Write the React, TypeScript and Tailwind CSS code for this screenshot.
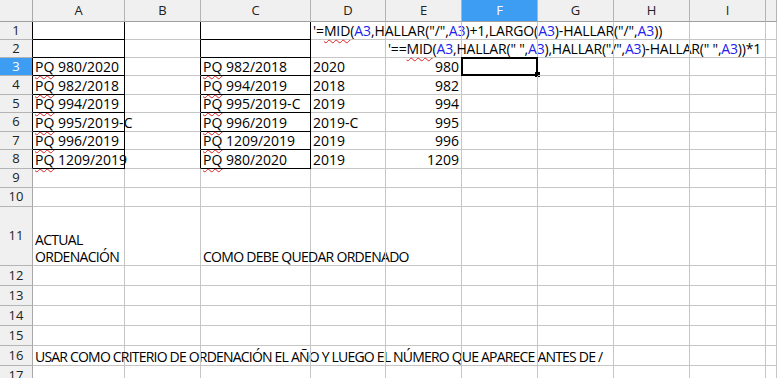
import React from "react";

const COLS = ["A", "B", "C", "D", "E", "F", "G", "H", "I", ""];
const COLW = [
  "w-[92px]",
  "w-[76px]",
  "w-[110px]",
  "w-[75px]",
  "w-[76px]",
  "w-[76px]",
  "w-[76px]",
  "w-[76px]",
  "w-[76px]",
  "flex-1",
];

const ROWH: Record<number, string> = {
  1: "h-[18px]",
  2: "h-[18px]",
  3: "h-[18px]",
  4: "h-[19px]",
  5: "h-[18px]",
  6: "h-[19px]",
  7: "h-[18px]",
  8: "h-[19px]",
  9: "h-[19px]",
  10: "h-[19px]",
  11: "h-[59px]",
  12: "h-[20px]",
  13: "h-[20px]",
  14: "h-[20px]",
  15: "h-[20px]",
  16: "h-[20px]",
  17: "h-[20px]",
};

const Ref = ({ children }: { children: React.ReactNode }) => (
  <span className="text-[#2222ee]">{children}</span>
);
const Sq = ({ children }: { children: React.ReactNode }) => (
  <span className="underline decoration-wavy decoration-[#e02020] decoration-1 underline-offset-[3px]">
    {children}
  </span>
);

const PQ = ({ t }: { t: string }) => (
  <span>
    <Sq>PQ</Sq> {t}
  </span>
);

const F1 = (
  <span className="tracking-[-0.1px]">
    '=<Sq>MID</Sq>(<Ref>A3</Ref>,HALLAR("/",<Ref>A3</Ref>)+1,LARGO(<Ref>A3</Ref>)-HALLAR("/",<Ref>A3</Ref>))
  </span>
);
const F2 = (
  <span className="tracking-[-0.2px]">
    '==<Sq>MID</Sq>(<Ref>A3</Ref>,HALLAR(" ",<Ref>A3</Ref>),HALLAR("/",<Ref>A3</Ref>)-HALLAR(" ",<Ref>A3</Ref>))*1
  </span>
);

type CellDef = { c: React.ReactNode; right?: boolean };

const data: Record<number, Record<number, CellDef>> = {
  1: { 3: { c: F1 } },
  2: { 4: { c: F2 } },
  3: { 0: { c: <PQ t="980/2020" /> }, 2: { c: <PQ t="982/2018" /> }, 3: { c: "2020" }, 4: { c: "980", right: true } },
  4: { 0: { c: <PQ t="982/2018" /> }, 2: { c: <PQ t="994/2019" /> }, 3: { c: "2018" }, 4: { c: "982", right: true } },
  5: { 0: { c: <PQ t="994/2019" /> }, 2: { c: <PQ t="995/2019-C" /> }, 3: { c: "2019" }, 4: { c: "994", right: true } },
  6: { 0: { c: <PQ t="995/2019-C" /> }, 2: { c: <PQ t="996/2019" /> }, 3: { c: "2019-C" }, 4: { c: "995", right: true } },
  7: { 0: { c: <PQ t="996/2019" /> }, 2: { c: <PQ t="1209/2019" /> }, 3: { c: "2019" }, 4: { c: "996", right: true } },
  8: { 0: { c: <PQ t="1209/2019" /> }, 2: { c: <PQ t="980/2020" /> }, 3: { c: "2019" }, 4: { c: "1209", right: true } },
  11: {
    0: {
      c: (
        <span className="whitespace-normal leading-[17px] block w-[90px] tracking-[-0.7px]">
          ACTUAL ORDENACIÓN
        </span>
      ),
    },
    2: { c: <span className="tracking-[-0.7px]">COMO DEBE QUEDAR ORDENADO</span> },
  },
  16: {
    0: {
      c: (
        <span className="tracking-[-0.8px]">
          USAR COMO CRITERIO DE ORDENACIÓN EL AÑO Y LUEGO EL NÚMERO QUE APARECE ANTES DE /
        </span>
      ),
    },
  },
};

function Cell({ row, col }: { row: number; col: number }) {
  const def = data[row]?.[col];
  const boxedA = col === 0 && row >= 1 && row <= 8;
  const boxedC = col === 2 && row >= 1 && row <= 8;
  const leftOfC = col === 1 && row >= 1 && row <= 8;
  const black = boxedA || boxedC;
  const rightCls = black || leftOfC ? "border-r-black" : "border-r-[#c6c6c6]";
  const bottomCls = black ? "border-b-black" : "border-b-[#c6c6c6]";
  const selected = row === 3 && col === 5;
  return (
    <div
      className={`relative shrink-0 h-full border-r border-b ${rightCls} ${bottomCls} ${COLW[col]} flex items-end ${
        def?.right ? "justify-end pr-[2px]" : "pl-[2px]"
      } whitespace-nowrap text-[14px] leading-[17px] text-black`}
    >
      {def && <div>{def.c}</div>}
      {selected && (
        <>
          <div className="absolute left-[-1px] top-[-1px] w-[77px] h-[19px] border-2 border-black" />
          <div className="absolute left-[73px] top-[14px] w-[5px] h-[5px] bg-black" />
        </>
      )}
    </div>
  );
}

export default function App() {
  const rows = Array.from({ length: 17 }, (_, i) => i + 1);
  return (
    <div
      className="w-[777px] h-[378px] overflow-hidden bg-white flex flex-col"
      style={{ fontFamily: '"Open Sans", "Noto Sans", sans-serif' }}
    >
      <div className="flex h-[22px] shrink-0 bg-[#f0f0f0]">
        <div className="w-[33px] shrink-0 h-full border-r border-b border-r-[#a8a8a8] border-b-[#a0a0a0]" />
        {COLS.map((c, i) => (
          <div
            key={i}
            className={`shrink-0 h-full ${COLW[i]} border-b border-r border-b-[#a0a0a0] border-r-[#b4b4b4] flex items-center justify-center text-[13px] ${
              i === 5 ? "bg-[#3c9df2] text-white" : "text-[#222]"
            }`}
          >
            {c}
          </div>
        ))}
      </div>
      {rows.map((r) => (
        <div key={r} className={`flex shrink-0 ${ROWH[r]}`}>
          <div
            className={`w-[33px] shrink-0 h-full border-r border-b ${
              r >= 1 && r <= 8 ? "border-r-black" : "border-r-[#a8a8a8]"
            } border-b-[#b4b4b4] flex items-center justify-center text-[13px] ${
              r === 3 ? "bg-[#3c9df2] text-white" : "bg-[#f0f0f0] text-[#222]"
            }`}
          >
            {r}
          </div>
          {COLS.map((_, c) => (
            <Cell key={c} row={r} col={c} />
          ))}
        </div>
      ))}
    </div>
  );
}
